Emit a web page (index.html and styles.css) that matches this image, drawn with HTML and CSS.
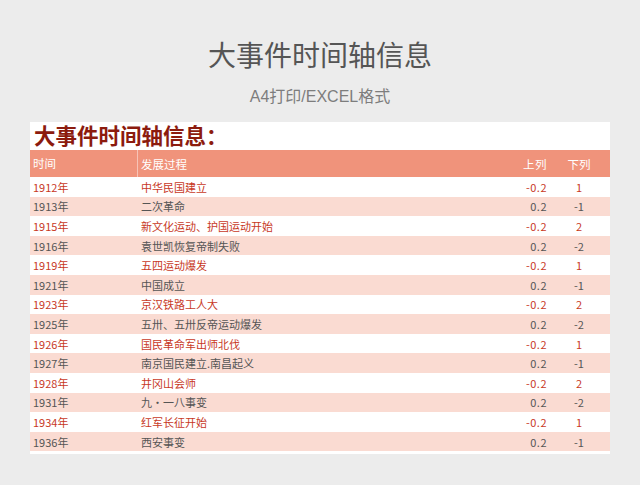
FILE: index.html
```html
<!DOCTYPE html>
<html lang="zh-CN">
<head>
<meta charset="utf-8">
<title>大事件时间轴信息</title>
<link rel="stylesheet" href="styles.css">
</head>
<body>
<header class="top">
  <h1 class="main-title">大事件时间轴信息</h1>
  <p class="sub-title">A4打印/EXCEL格式</p>
</header>
<section class="card">
  <h2 class="card-title">大事件时间轴信息：</h2>
  <div class="table">
    <div class="row head">
      <div class="c1">时间</div><div class="c2">发展过程</div><div class="c3">上列</div><div class="c4">下列</div>
    </div>
    <div class="row odd"><div class="c1">1912年</div><div class="c2">中华民国建立</div><div class="c3">-0.2</div><div class="c4">1</div></div>
    <div class="row even"><div class="c1">1913年</div><div class="c2">二次革命</div><div class="c3">0.2</div><div class="c4">-1</div></div>
    <div class="row odd"><div class="c1">1915年</div><div class="c2">新文化运动、护国运动开始</div><div class="c3">-0.2</div><div class="c4">2</div></div>
    <div class="row even"><div class="c1">1916年</div><div class="c2">袁世凯恢复帝制失败</div><div class="c3">0.2</div><div class="c4">-2</div></div>
    <div class="row odd"><div class="c1">1919年</div><div class="c2">五四运动爆发</div><div class="c3">-0.2</div><div class="c4">1</div></div>
    <div class="row even"><div class="c1">1921年</div><div class="c2">中国成立</div><div class="c3">0.2</div><div class="c4">-1</div></div>
    <div class="row odd"><div class="c1">1923年</div><div class="c2">京汉铁路工人大</div><div class="c3">-0.2</div><div class="c4">2</div></div>
    <div class="row even"><div class="c1">1925年</div><div class="c2">五卅、五卅反帝运动爆发</div><div class="c3">0.2</div><div class="c4">-2</div></div>
    <div class="row odd"><div class="c1">1926年</div><div class="c2">国民革命军出师北伐</div><div class="c3">-0.2</div><div class="c4">1</div></div>
    <div class="row even"><div class="c1">1927年</div><div class="c2">南京国民建立.南昌起义</div><div class="c3">0.2</div><div class="c4">-1</div></div>
    <div class="row odd"><div class="c1">1928年</div><div class="c2">井冈山会师</div><div class="c3">-0.2</div><div class="c4">2</div></div>
    <div class="row even"><div class="c1">1931年</div><div class="c2">九・一八事变</div><div class="c3">0.2</div><div class="c4">-2</div></div>
    <div class="row odd"><div class="c1">1934年</div><div class="c2">红军长征开始</div><div class="c3">-0.2</div><div class="c4">1</div></div>
    <div class="row even"><div class="c1">1936年</div><div class="c2">西安事变</div><div class="c3">0.2</div><div class="c4">-1</div></div>
  </div>
</section>
</body>
</html>
```

FILE: styles.css
```css
html, body {
  margin: 0;
  padding: 0;
}
body {
  background: #ececec;
  font-family: "Noto Sans CJK SC", "Noto Sans", sans-serif;
  width: 640px;
  height: 485px;
  overflow: hidden;
}
.top {
  display: flex;
  flex-direction: column;
  align-items: center;
  padding-top: 34px;
  height: 108px;
  box-sizing: border-box;
}
.main-title {
  margin: 0;
  font-size: 28px;
  line-height: 40px;
  font-weight: 400;
  color: #555555;
}
.sub-title {
  margin: 13px 0 0;
  font-family: "Liberation Sans", "Noto Sans CJK SC", sans-serif;
  font-size: 16px;
  line-height: 20px;
  color: #7d7d7d;
}
.card {
  margin: 14px 0 0 30px;
  width: 580px;
  background: #ffffff;
  padding-bottom: 3px;
}
.card-title {
  margin: 0;
  height: 28px;
  padding-left: 4px;
  font-size: 21.5px;
  line-height: 26px;
  font-weight: 700;
  color: #8c1b0e;
}
.row {
  display: grid;
  grid-template-columns: 108px 330px 80px 62px;
  height: 19.6px;
  align-items: center;
  font-size: 11px;
  line-height: 14px;
}
.row.head {
  height: 27px;
  background: #f0937b;
  color: #ffffff;
  font-size: 11.5px;
}
.row.head .c1 {
  border-right: 1px solid rgba(255, 255, 255, 0.45);
  height: 27px;
  line-height: 27px;
  box-sizing: border-box;
}
.row.odd {
  background: #ffffff;
  color: #c8391f;
}
.row.even {
  background: #fadbd2;
  color: #555555;
}
.c1 {
  padding-left: 3px;
}
.c2 {
  padding-left: 3px;
}
.c3 {
  text-align: right;
  padding-right: 1px;
  letter-spacing: 0.5px;
}
.c4 {
  text-align: center;
}
```
